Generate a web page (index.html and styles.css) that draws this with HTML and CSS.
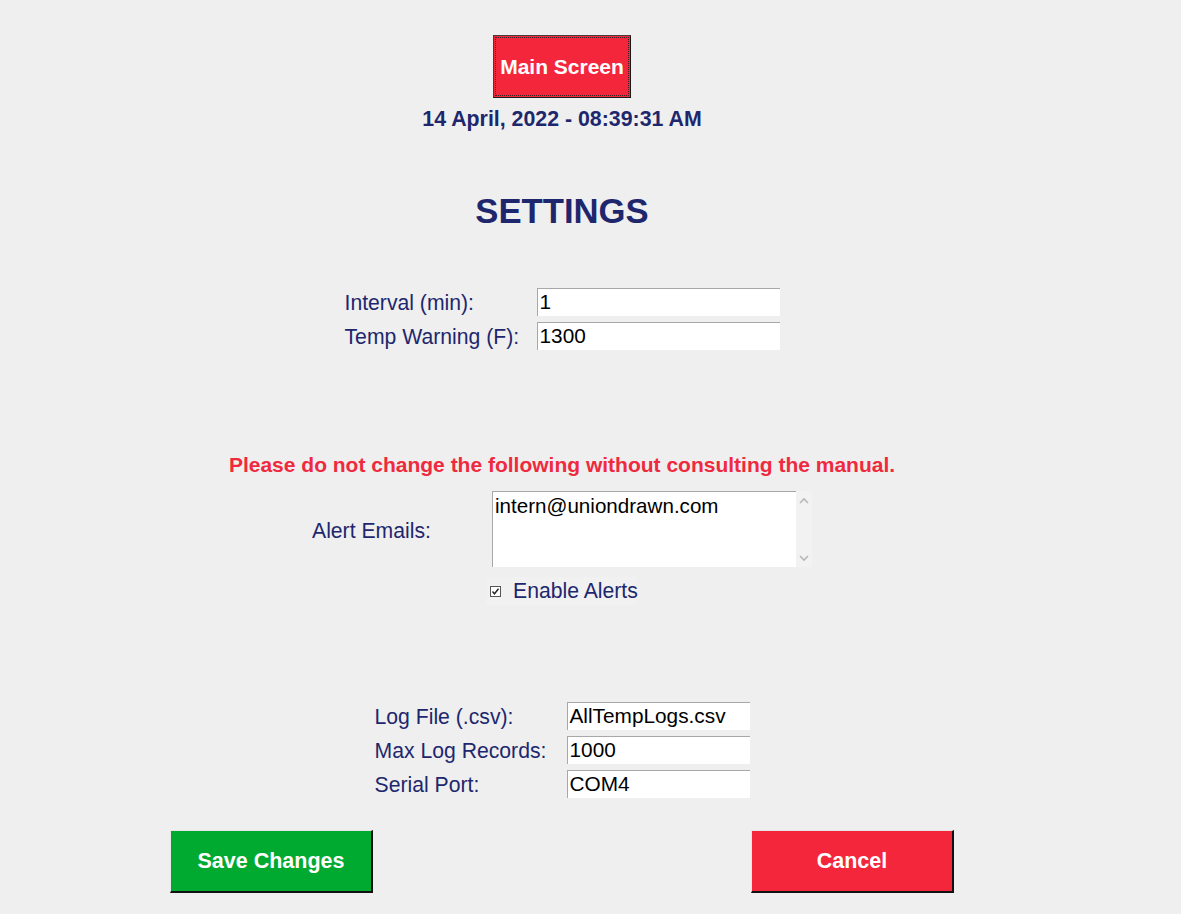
FILE: index.html
```html
<!DOCTYPE html>
<html>
<head>
<meta charset="utf-8">
<title>Settings</title>
<link rel="stylesheet" href="styles.css">
</head>
<body>
<div class="page">
  <div class="header">
    <div class="main-btn"><span class="main-btn-inner">Main Screen</span></div>
    <div class="date">14 April, 2022 - 08:39:31 AM</div>
    <h1 class="title">SETTINGS</h1>
  </div>

  <div class="grid grid-top">
    <div class="label">Interval (min):</div>
    <div class="field">1</div>
    <div class="label">Temp Warning (F):</div>
    <div class="field">1300</div>
  </div>

  <div class="warning">Please do not change the following without consulting the manual.</div>

  <div class="alerts">
    <div class="label alerts-label">Alert Emails:</div>
    <div class="alerts-col">
      <div class="textarea">
        <div class="textarea-text">intern@uniondrawn.com</div>
        <div class="scrollbar">
          <svg width="10" height="7" viewBox="0 0 10 7"><path d="M1 6 L5 2 L9 6" fill="none" stroke="#b8b8b8" stroke-width="1.6"/></svg>
          <svg width="10" height="7" viewBox="0 0 10 7"><path d="M1 1 L5 5 L9 1" fill="none" stroke="#b8b8b8" stroke-width="1.6"/></svg>
        </div>
      </div>
      <div class="check-row">
        <span class="checkbox"><svg width="9" height="9" viewBox="0 0 9 9"><path d="M1.5 4.5 L3.5 6.8 L7.5 1.8" fill="none" stroke="#222" stroke-width="1.4"/></svg></span>
        <span class="check-label">Enable Alerts</span>
      </div>
    </div>
  </div>

  <div class="grid grid-log">
    <div class="label">Log File (.csv):</div>
    <div class="field">AllTempLogs.csv</div>
    <div class="label">Max Log Records:</div>
    <div class="field">1000</div>
    <div class="label">Serial Port:</div>
    <div class="field">COM4</div>
  </div>

  <div class="actions">
    <div class="btn btn-save">Save Changes</div>
    <div class="btn btn-cancel">Cancel</div>
  </div>
</div>
</body>
</html>
```

FILE: styles.css
```css
html, body {
  margin: 0;
  padding: 0;
  background: #efefef;
  font-family: "Liberation Sans", Arial, sans-serif;
}

.page {
  width: 784px;
  margin-left: 170px;
  padding-top: 35px;
  display: flex;
  flex-direction: column;
  color: #1e276d;
}

.header {
  display: flex;
  flex-direction: column;
  align-items: center;
}

.main-btn {
  box-sizing: border-box;
  width: 138px;
  height: 63px;
  background: #f4263b;
  border: 1px solid #4a3a3a;
  border-right-color: #1a1a1a;
  border-bottom-color: #1a1a1a;
  padding: 1px;
  display: flex;
}

.main-btn-inner {
  flex: 1;
  border: 1px dotted #3a2020;
  display: flex;
  align-items: center;
  justify-content: center;
  color: #fff;
  font-weight: bold;
  font-size: 21px;
}

.date {
  margin-top: 9px;
  font-weight: bold;
  font-size: 21.33px;
  line-height: 24px;
}

.title {
  margin: 60px 0 0 0;
  font-size: 34.7px;
  line-height: 40px;
  font-weight: bold;
}

.grid {
  display: grid;
  row-gap: 6px;
  align-self: center;
  align-items: center;
}

.grid .label {
  padding-top: 2px;
}

.grid-top {
  margin-top: 57px;
  grid-template-columns: 192px 243px;
}

.grid-log {
  margin-top: 97px;
  grid-template-columns: 192px 183px;
}

.label {
  font-size: 21.2px;
  line-height: 24px;
  color: #1e276d;
  white-space: nowrap;
}

.field {
  box-sizing: border-box;
  height: 28px;
  background: #fff;
  border-top: 1px solid #a8a8a8;
  border-left: 1px solid #a8a8a8;
  padding: 0 3px 0 2px;
  font-size: 20.8px;
  line-height: 26px;
  color: #000;
  white-space: nowrap;
  overflow: hidden;
}

.warning {
  margin-top: 103px;
  text-align: center;
  font-weight: bold;
  font-size: 21px;
  line-height: 24px;
  color: #ef2a3e;
}

.alerts {
  margin-top: 14px;
  align-self: center;
  display: grid;
  grid-template-columns: 180px 320px;
}

.alerts-label {
  box-sizing: border-box;
  height: 76px;
  padding-top: 3px;
  display: flex;
  align-items: center;
}

.alerts-col {
  display: flex;
  flex-direction: column;
}

.textarea {
  box-sizing: border-box;
  height: 76px;
  display: flex;
  background: #f2f2f2;
}

.textarea-text {
  flex: 1;
  background: #fff;
  border-top: 1px solid #a8a8a8;
  border-left: 1px solid #a8a8a8;
  padding: 2px 3px 0 2px;
  font-size: 20.6px;
  line-height: 24px;
  color: #000;
}

.scrollbar {
  width: 16px;
  display: flex;
  flex-direction: column;
  justify-content: space-between;
  align-items: center;
  padding: 6px 0 5px;
}

.check-row {
  margin-top: 10px;
  margin-left: -6px;
  width: 150px;
  height: 28px;
  display: flex;
  align-items: center;
  background: #f1f1f1;
  white-space: nowrap;
}

.checkbox {
  flex: none;
  box-sizing: border-box;
  width: 11px;
  height: 11px;
  margin-left: 4px;
  border: 1px solid #555;
  background: #fff;
  display: flex;
  align-items: center;
  justify-content: center;
}

.check-label {
  flex: none;
  margin-left: 12px;
  font-size: 21.2px;
  line-height: 24px;
  color: #1e276d;
}

.actions {
  margin-top: 32px;
  display: flex;
  justify-content: space-between;
}

.btn {
  box-sizing: border-box;
  width: 203px;
  height: 63px;
  display: flex;
  align-items: center;
  justify-content: center;
  color: #fff;
  font-weight: bold;
  font-size: 21.5px;
  border-top: 1px solid #e6e6e6;
  border-left: 1px solid #e6e6e6;
  border-right: 2px solid #111;
  border-bottom: 2px solid #111;
}

.btn-save {
  background: #00aa30;
}

.btn-cancel {
  background: #f4263b;
}
```
